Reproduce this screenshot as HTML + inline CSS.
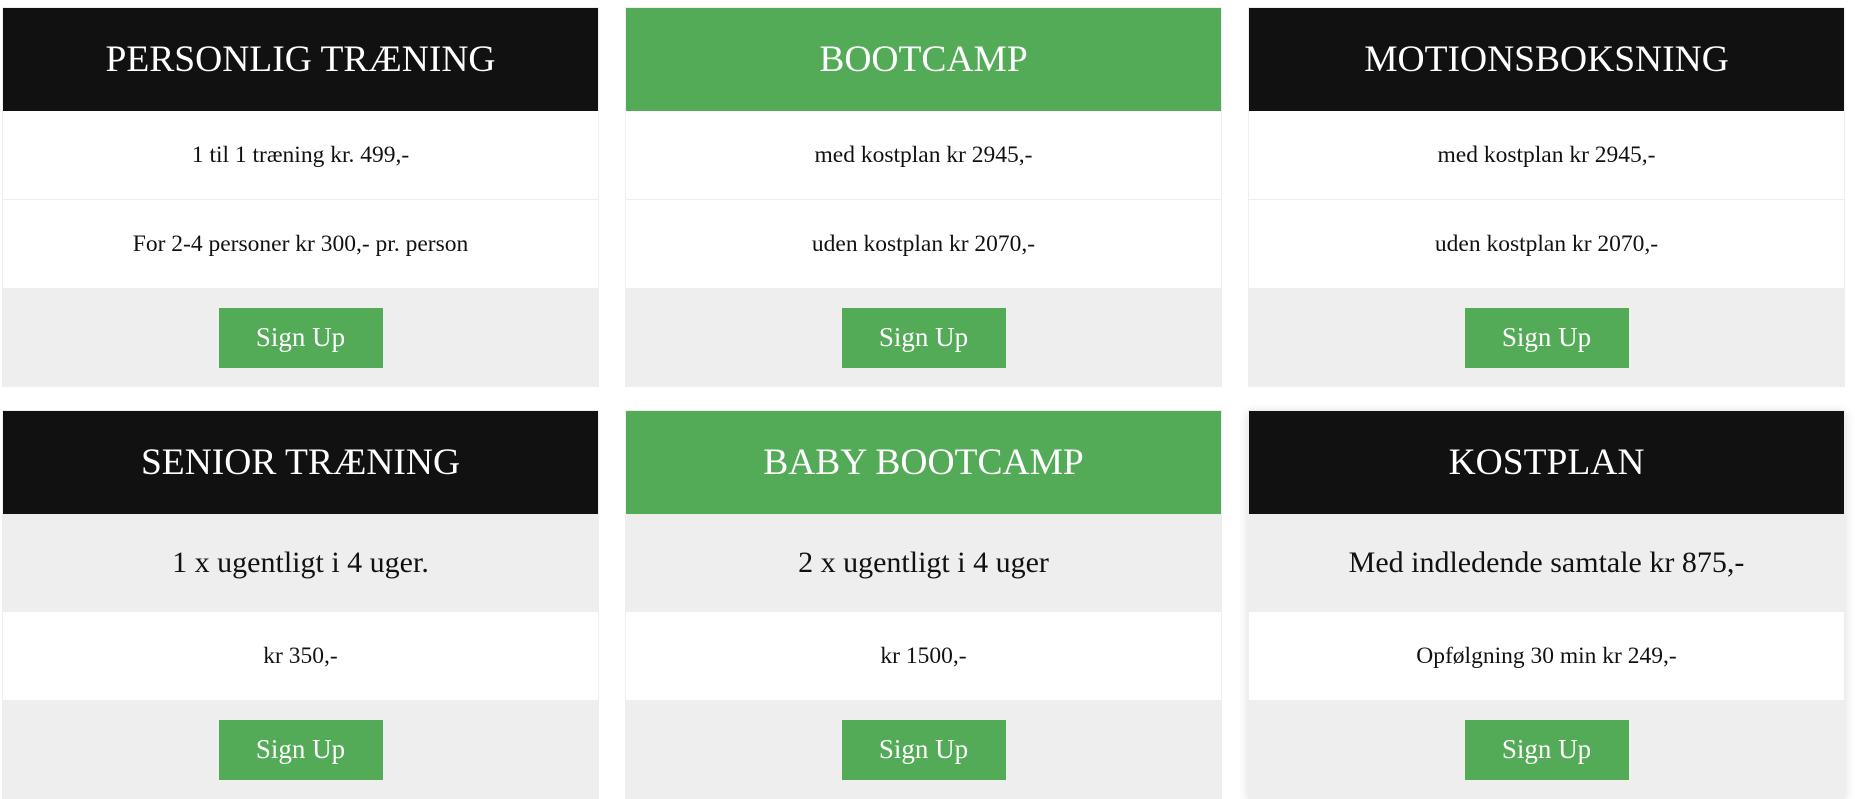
<!DOCTYPE html>
<html><head><meta charset="utf-8"><style>
html,body{margin:0;padding:0;background:#fff;width:1855px;height:796px;overflow:hidden;font-family:"Liberation Serif","Times New Roman",serif}
.card{position:absolute;width:597px;box-sizing:border-box;border:1px solid #eee;}
.h{height:103px;color:#fff;font-size:37.5px;display:flex;align-items:center;justify-content:center;}
.blk{background:#111}.grn{background:#53ab58}
.r{display:flex;align-items:center;justify-content:center;color:#111;font-size:23.5px;border-bottom:1px solid #eee;}
.w{background:#fff}.g{background:#eee}
.big{font-size:30px}
.f{background:#eee;display:flex;align-items:center;justify-content:center;height:97px}
.btn{width:164px;height:60px;background:#53ab58;color:#fff;font-size:27px;display:flex;align-items:center;justify-content:center}
.sh{box-shadow:0 2px 10px rgba(0,0,0,.15)}
</style></head><body>

<div class="card" style="left:2px;top:7px">
<div class="h blk">PERSONLIG TRÆNING</div>
<div class="r w" style="height:88px">1 til 1 træning kr. 499,-</div>
<div class="r w" style="height:88px">For 2-4 personer kr 300,- pr. person</div>
<div class="f"><div class="btn">Sign Up</div></div>
</div>
<div class="card" style="left:625px;top:7px">
<div class="h grn">BOOTCAMP</div>
<div class="r w" style="height:88px">med kostplan kr 2945,-</div>
<div class="r w" style="height:88px">uden kostplan kr 2070,-</div>
<div class="f"><div class="btn">Sign Up</div></div>
</div>
<div class="card" style="left:1248px;top:7px">
<div class="h blk">MOTIONSBOKSNING</div>
<div class="r w" style="height:88px">med kostplan kr 2945,-</div>
<div class="r w" style="height:88px">uden kostplan kr 2070,-</div>
<div class="f"><div class="btn">Sign Up</div></div>
</div>

<div class="card" style="left:2px;top:410px">
<div class="h blk">SENIOR TRÆNING</div>
<div class="r g big" style="height:97px">1 x ugentligt i 4 uger.</div>
<div class="r w" style="height:88px">kr 350,-</div>
<div class="f"><div class="btn">Sign Up</div></div>
</div>
<div class="card" style="left:625px;top:410px">
<div class="h grn">BABY BOOTCAMP</div>
<div class="r g big" style="height:97px">2 x ugentligt i 4 uger</div>
<div class="r w" style="height:88px">kr 1500,-</div>
<div class="f"><div class="btn">Sign Up</div></div>
</div>
<div class="card sh" style="left:1248px;top:410px">
<div class="h blk">KOSTPLAN</div>
<div class="r g big" style="height:97px">Med indledende samtale kr 875,-</div>
<div class="r w" style="height:88px">Opfølgning 30 min kr 249,-</div>
<div class="f"><div class="btn">Sign Up</div></div>
</div>

</body></html>
